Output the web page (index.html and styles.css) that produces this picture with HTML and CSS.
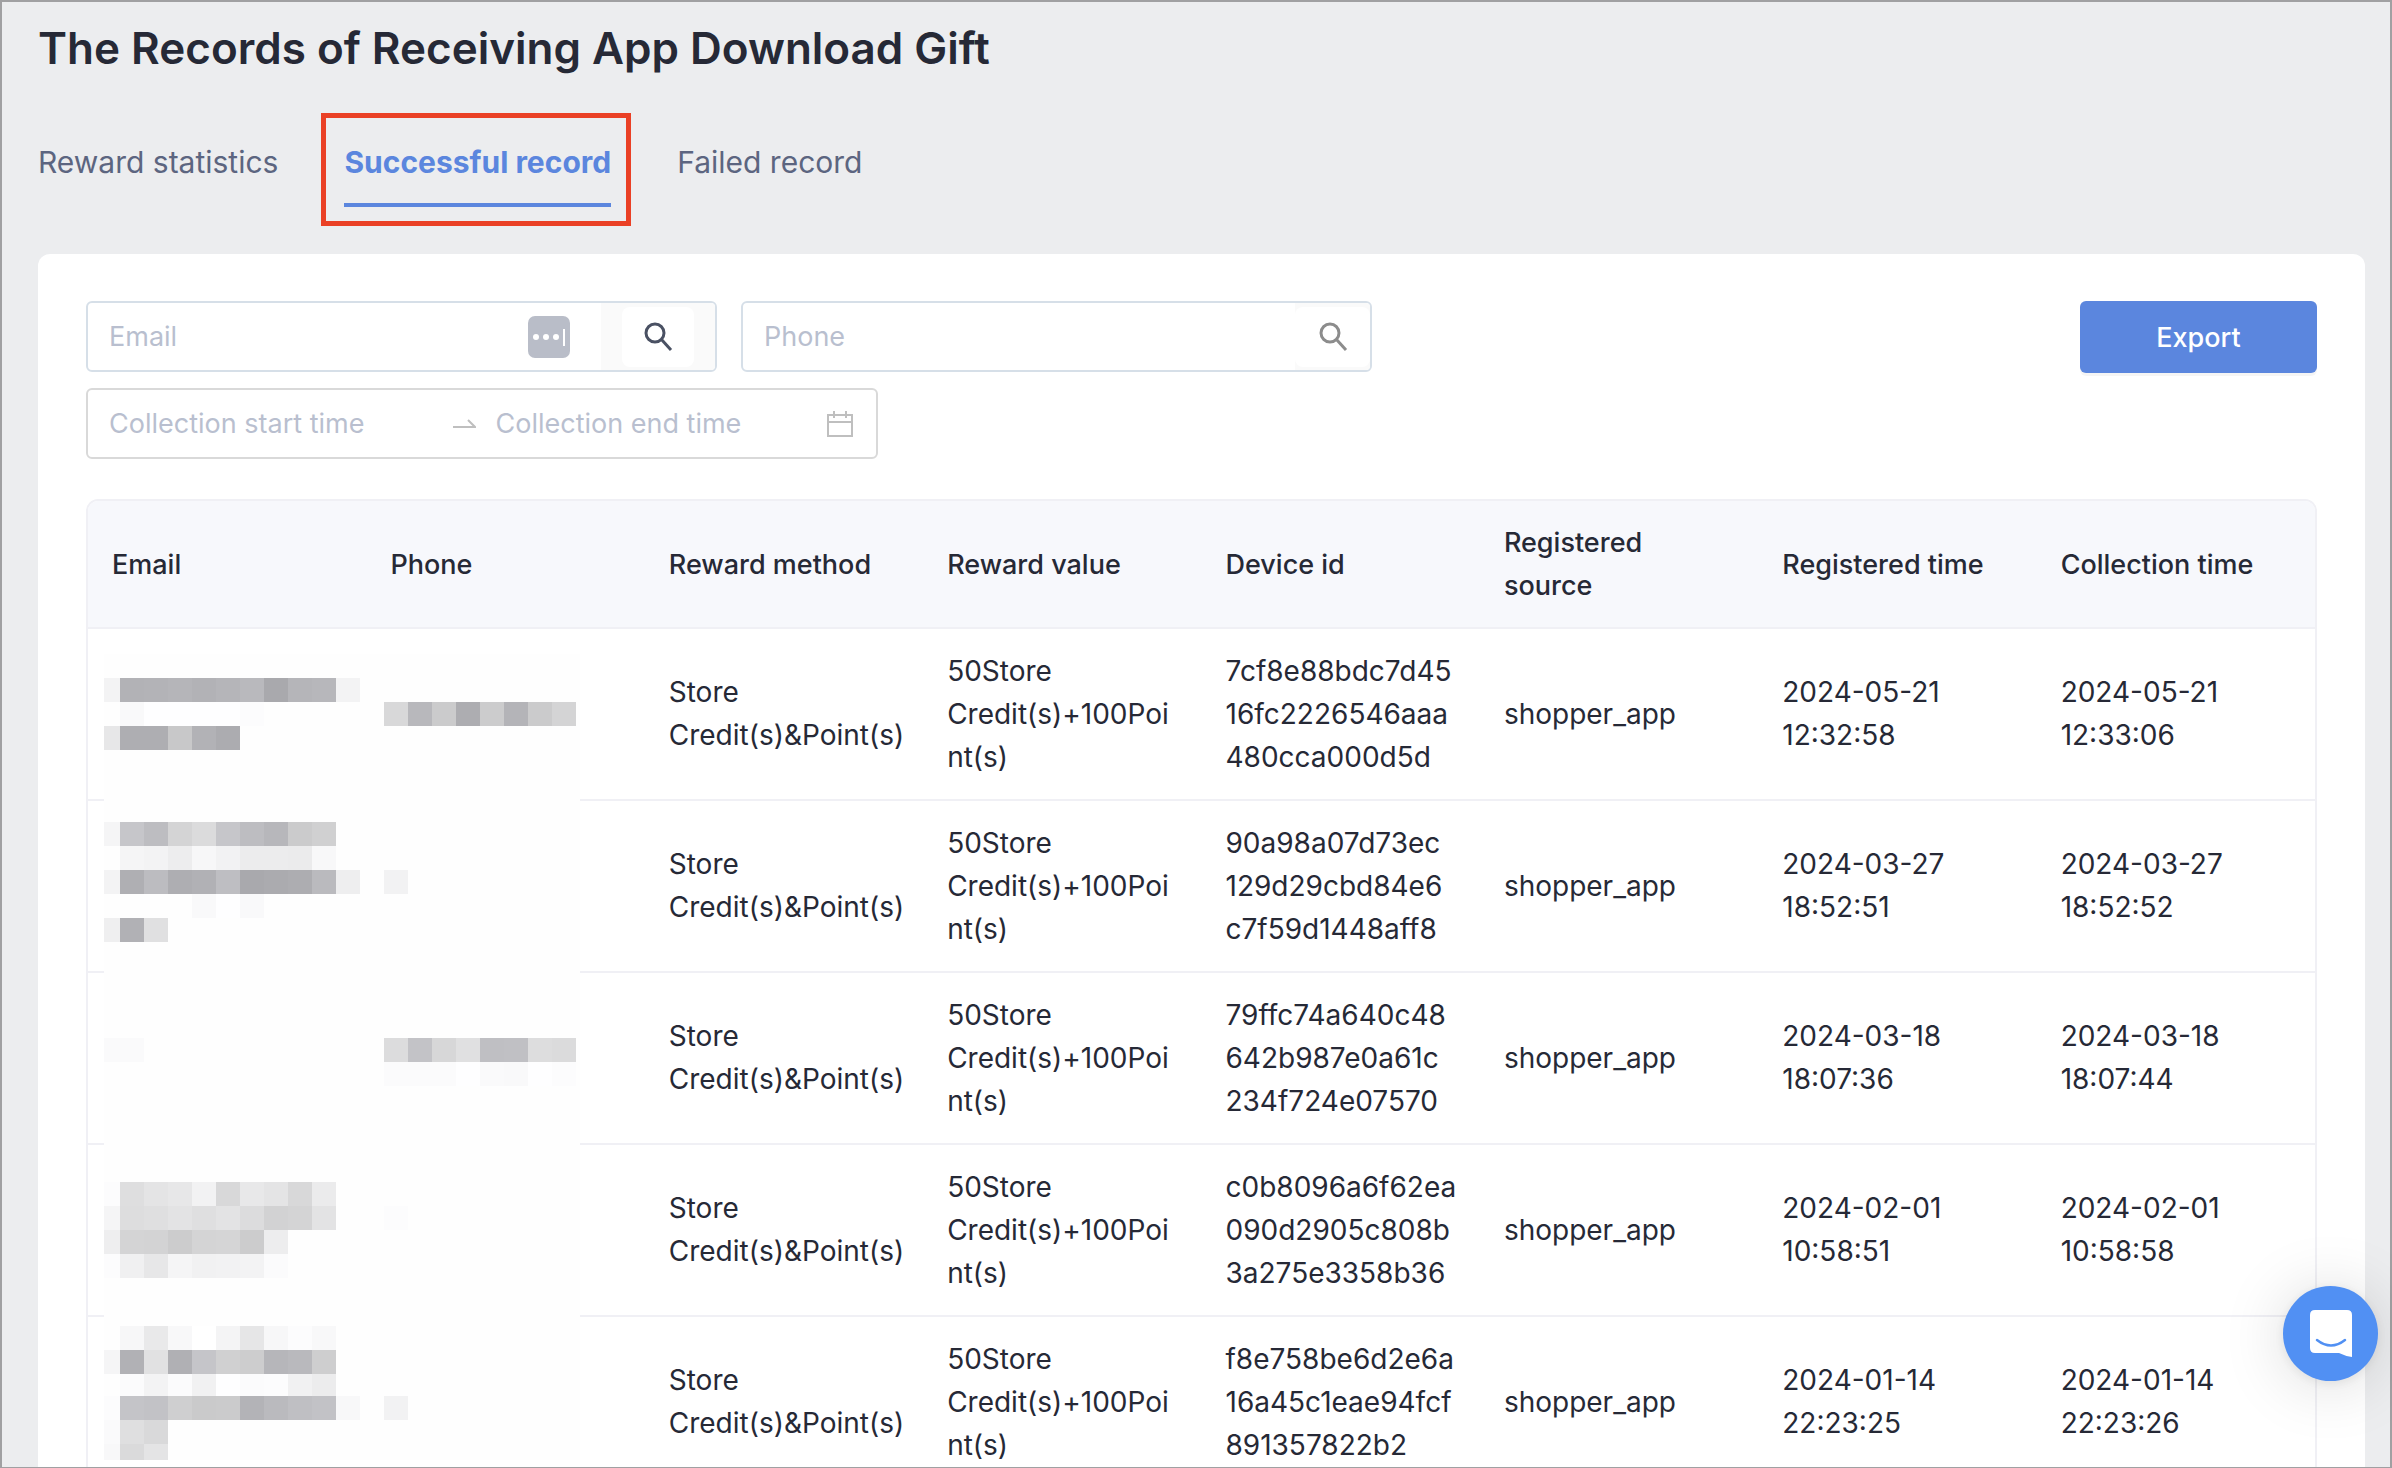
FILE: index.html
```html
<!DOCTYPE html>
<html lang="en">
<head>
    <meta charset="UTF-8">
    <meta name="viewport" content="width=device-width, initial-scale=1.0">
    <title>The Records of Receiving App Download Gift</title>
    <link rel="stylesheet" href="styles.css">
</head>
<body>
    <div class="page">
        <h1 class="title">The Records of Receiving App Download Gift</h1>

        <!-- Tabs -->
        <nav class="tabs">
            <a class="tab" href="#statistics">Reward statistics</a>
            <a class="tab active" href="#successful" aria-current="page">Successful record</a>
            <a class="tab" href="#failed">Failed record</a>
        </nav>

        <main class="card">
            <!-- Filters -->
            <form class="toolbar">
                <div class="filters">
                    <div class="field search">
                        <input type="text" placeholder="Email" aria-label="Email">
                        <svg class="autofill" viewBox="0 0 42 42" aria-hidden="true">
                            <rect width="42" height="42" rx="7" fill="#b9bdc8"/>
                            <g fill="#fff">
                                <circle cx="8" cy="21" r="3"/>
                                <circle cx="18" cy="21" r="3"/>
                                <circle cx="28" cy="21" r="3"/>
                                <rect x="35" y="13" width="2" height="17"/>
                            </g>
                        </svg>
                        <div class="addon">
                            <button class="search-btn boxed" type="button" aria-label="Search email">
                                <svg viewBox="0 0 32 32" width="32" height="32">
                                    <circle cx="13" cy="12" r="9"/>
                                    <path d="M19.500 18.500 29 29"/>
                                </svg>
                            </button>
                        </div>
                    </div>
                    <div class="field search">
                        <input type="text" placeholder="Phone" aria-label="Phone">
                        <div class="addon plain">
                            <button class="search-btn" type="button" aria-label="Search phone">
                                <svg viewBox="0 0 32 32" width="32" height="32">
                                    <circle cx="13" cy="12" r="9"/>
                                    <path d="M19.500 18.500 29 29"/>
                                </svg>
                            </button>
                        </div>
                    </div>
                    <div class="field range">
                        <input type="text" placeholder="Collection start time" aria-label="Collection start time">
                        <svg class="arrow" viewBox="0 0 24 12" width="24" height="12" aria-hidden="true">
                            <path d="M1 9H23L16 2"/>
                        </svg>
                        <input type="text" placeholder="Collection end time" aria-label="Collection end time">
                        <svg class="calendar" viewBox="0 0 28 28" width="28" height="28" aria-hidden="true">
                            <path d="M2 5H26V26H2ZM2 12H26M8 1V8M20 1V8"/>
                        </svg>
                    </div>
                </div>
                <button class="export" type="button">Export</button>
            </form>

            <!-- Records -->
            <div class="table-wrap">
                <table>
                    <thead>
                        <tr>
                            <th>Email</th>
                            <th>Phone</th>
                            <th>Reward method</th>
                            <th>Reward value</th>
                            <th>Device id</th>
                            <th>Registered<br>source</th>
                            <th>Registered time</th>
                            <th>Collection time</th>
                        </tr>
                    </thead>
                    <tbody>
                        <tr>
                            <td></td>
                            <td></td>
                            <td>Store Credit(s)&amp;Point(s)</td>
                            <td>50Store<br>Credit(s)+100Poi<br>nt(s)</td>
                            <td>7cf8e88bdc7d45<br>16fc2226546aaa<br>480cca000d5d</td>
                            <td>shopper_app</td>
                            <td>2024-05-21<br>12:32:58</td>
                            <td>2024-05-21<br>12:33:06</td>
                        </tr>
                        <tr>
                            <td></td>
                            <td></td>
                            <td>Store Credit(s)&amp;Point(s)</td>
                            <td>50Store<br>Credit(s)+100Poi<br>nt(s)</td>
                            <td>90a98a07d73ec<br>129d29cbd84e6<br>c7f59d1448aff8</td>
                            <td>shopper_app</td>
                            <td>2024-03-27<br>18:52:51</td>
                            <td>2024-03-27<br>18:52:52</td>
                        </tr>
                        <tr>
                            <td></td>
                            <td></td>
                            <td>Store Credit(s)&amp;Point(s)</td>
                            <td>50Store<br>Credit(s)+100Poi<br>nt(s)</td>
                            <td>79ffc74a640c48<br>642b987e0a61c<br>234f724e07570</td>
                            <td>shopper_app</td>
                            <td>2024-03-18<br>18:07:36</td>
                            <td>2024-03-18<br>18:07:44</td>
                        </tr>
                        <tr>
                            <td></td>
                            <td></td>
                            <td>Store Credit(s)&amp;Point(s)</td>
                            <td>50Store<br>Credit(s)+100Poi<br>nt(s)</td>
                            <td>c0b8096a6f62ea<br>090d2905c808b<br>3a275e3358b36</td>
                            <td>shopper_app</td>
                            <td>2024-02-01<br>10:58:51</td>
                            <td>2024-02-01<br>10:58:58</td>
                        </tr>
                        <tr>
                            <td></td>
                            <td></td>
                            <td>Store Credit(s)&amp;Point(s)</td>
                            <td>50Store<br>Credit(s)+100Poi<br>nt(s)</td>
                            <td>f8e758be6d2e6a<br>16a45c1eae94fcf<br>891357822b2</td>
                            <td>shopper_app</td>
                            <td>2024-01-14<br>22:23:25</td>
                            <td>2024-01-14<br>22:23:26</td>
                        </tr>
                    </tbody>
                </table>
                <!-- Pixelated mask over the private columns -->
                <svg class="mosaic" id="mosaic" viewBox="8 0 476 806" width="476" height="806" aria-hidden="true"></svg>
            </div>
        </main>
    </div>

    <button class="chat" type="button" aria-label="Open chat">
        <svg viewBox="0 0 42 48" width="42" height="48" aria-hidden="true">
            <path d="M5 0H37Q42 0 42 5V47Q35 46 29 43H5Q0 43 0 38V5Q0 0 5 0Z" fill="#fff"/>
            <path d="M7 30Q21 41 35 30" fill="none" stroke="#5190f3" stroke-width="2.500" stroke-linecap="round"/>
        </svg>
    </button>

    <script>
        // Each strip: top, first column, grey levels in hex (one pair per 24px tile)
        const strips = [
            [24, 0, "f3b2b3b5b2b5b9a9b5b7f3"],
            [48, 1, "f9fefefefefc"],
            [72, 0, "e7aeaec8b2ac"],
            [48, 12, "d8b8cbadccb4cbd4"],
            [168, 0, "f5c6bdd4dbc6bdb7cbd0"],
            [192, 1, "f5f3edf7f2ececebf8"],
            [216, 0, "f3afbcaeb1bea9abadbaee"],
            [216, 12, "f2"],
            [240, 4, "f9fef9"],
            [264, 0, "efb1e0"],
            [384, 0, "fafa"],
            [384, 12, "dcc3d7e0bfc0dddb"],
            [408, 12, "fbfbfbfefaf9fefc"],
            [528, 0, "fcdee4e7f2d8e8e4d8eb"],
            [552, 0, "f5dddfe3dfe3dcd2d4e3"],
            [552, 12, "fc"],
            [576, 0, "eed4d3ccd4d5cced"],
            [600, 0, "fcf0e7f5f1f2f3fb"],
            [672, 1, "f7e9f8fff4e6f7fcf8"],
            [696, 0, "f5b1e1b0c5d0cdb6b9ce"],
            [720, 1, "fbf3fbf1fefbfcf1ec"],
            [742, 0, "fcc4c2cfcacbb3babfc2f8"],
            [742, 12, "f2"],
            [766, 0, "fadfd9"],
            [790, 0, "f8dae4"]
        ];
        const mosaic = document.getElementById("mosaic");
        let tiles = '<rect x="8" width="476" height="806" fill="#fefefe"/>';
        strips.forEach(([top, column, levels]) => {
            levels.match(/../g).forEach((level, i) => {
                const grey = parseInt(level, 16);
                const blue = Math.min(255, grey + (grey < 200 ? 4 : 1));
                tiles += `<rect x="${(column + i) * 24}" y="${top}" width="24" height="24" fill="rgb(${grey},${grey},${blue})"/>`;
            });
        });
        mosaic.innerHTML = tiles;
    </script>
</body>
</html>
```
FILE: styles.css
```css
* {
    box-sizing: border-box;
}

body {
    font-family: Inter, "Liberation Sans", sans-serif;
    font-size: 27px;
    line-height: 43px;
    color: #262936;
    background-color: #ecedef;
    margin: 0;
    height: 100vh;
    overflow: hidden;
    border: 2px solid #a0a0a2;
    border-bottom-width: 1px;
}

input, button {
    font: inherit;
    color: inherit;
    border: 0;
    margin: 0;
    padding: 0;
    background: none;
}

svg {
    display: block;
    flex: none;
}

.page {
    padding: 18px 25px 0 36px;
}

.title {
    font-size: 44px;
    line-height: 56px;
    font-weight: 600;
    margin: 0;
}

/* Tabs */
.tabs {
    display: flex;
    gap: 66px;
    margin-top: 53px;
}

.tab {
    position: relative;
    font-size: 30px;
    line-height: 66px;
    padding-bottom: 12px;
    color: #5c6580;
    text-decoration: none;
}

.tab.active {
    padding-bottom: 8px;
    border-bottom: 4px solid #5b86de;
    color: #5b86de;
    font-weight: 700;
}

.tab.active::after {
    content: "";
    position: absolute;
    inset: -16px -20px -23px -23px;
    border: 5px solid #ea4025;
}

/* Card */
.card {
    margin-top: 47px;
    padding: 47px 48px 48px 48px;
    background-color: #fff;
    border-radius: 12px;
}

.toolbar {
    display: flex;
    align-items: flex-start;
    justify-content: space-between;
}

.filters {
    display: flex;
    flex-wrap: wrap;
    gap: 16px 24px;
    flex: 0 1 1400px;
}

.field {
    display: flex;
    align-items: center;
    height: 71px;
    padding-left: 21px;
    border: 2px solid #d6dfe8;
    border-radius: 6px;
    overflow: hidden;
}

.field input {
    flex: 1;
    min-width: 0;
    outline: none;
}

.field input::placeholder {
    color: #b9bfcf;
    opacity: 1;
}

.search {
    width: 631px;
}

.autofill {
    width: 42px;
    height: 42px;
    margin-right: 31px;
}

.addon {
    display: flex;
    align-items: center;
    justify-content: center;
    align-self: stretch;
    width: 114px;
    background-color: #fafafa;
}

.addon.plain {
    width: 75px;
}

.search-btn {
    display: flex;
    align-items: center;
    justify-content: center;
    width: 100%;
    height: 60px;
    background-color: #fff;
    border-radius: 8px;
    color: #8c8c8c;
}

.search-btn.boxed {
    width: 72px;
    color: #4a5163;
}

.search-btn svg, .arrow, .calendar {
    fill: none;
    stroke: currentColor;
    stroke-width: 3;
}

.range {
    width: 792px;
    padding-right: 22px;
    border-color: #d9d9d9;
    color: #bfbfbf;
}

.arrow {
    margin: 0 20px;
    stroke-width: 2;
}

.calendar {
    margin-left: 8px;
    stroke-width: 2;
}

.export {
    width: 237px;
    height: 72px;
    background-color: #5b86de;
    border-radius: 6px;
    box-shadow: 0 3px 0 rgba(0, 0, 0, 0.04);
    color: #fff;
    font-weight: 500;
}

/* Table */
.table-wrap {
    position: relative;
    margin-top: 40px;
    border: 2px solid #f0f0f5;
    border-radius: 12px 12px 0 0;
    overflow: hidden;
}

table {
    width: 100%;
    table-layout: fixed;
    border-collapse: separate;
    border-spacing: 0;
}

th, td {
    height: 172px;
    padding: 0 18px 0 24px;
    border-bottom: 2px solid #f0f0f5;
    text-align: left;
    vertical-align: middle;
}

th {
    height: 128px;
    background-color: #f7f8fc;
    font-weight: 500;
}

td {
    font-size: 28px;
}

.mosaic {
    position: absolute;
    left: 16px;
    top: 153px;
}

/* Chat launcher */
.chat {
    position: fixed;
    right: 14px;
    bottom: 87px;
    display: flex;
    align-items: center;
    justify-content: center;
    width: 95px;
    height: 95px;
    border-radius: 50%;
    background-color: #5190f3;
    box-shadow: 0 2px 12px rgba(0, 0, 0, 0.08), 0 4px 64px rgba(0, 0, 0, 0.15);
}
```
